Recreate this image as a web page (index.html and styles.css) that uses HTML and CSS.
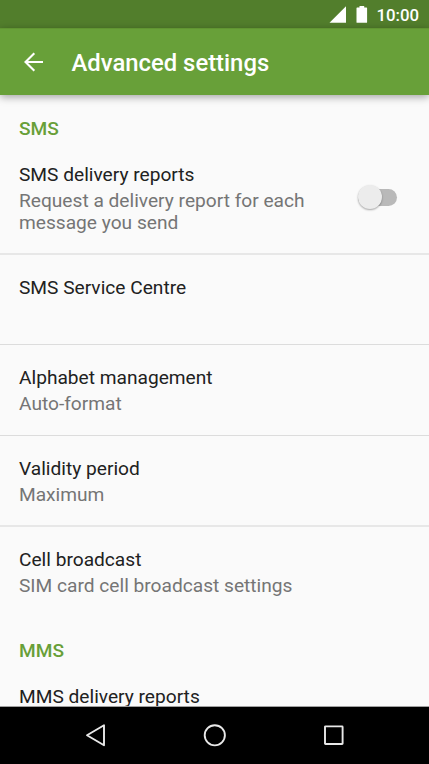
FILE: index.html
```html
<!DOCTYPE html>
<html lang="en">
<head>
<meta charset="utf-8">
<title>Advanced settings</title>
<link rel="stylesheet" href="styles.css">
</head>
<body>
<div class="status">
  <svg class="signal" width="18" height="18" viewBox="0 0 18 18"><path d="M0.5 16.8L17 0.3v16.5z" fill="#fff"/></svg>
  <svg class="battery" width="12" height="18" viewBox="0 0 12 18"><path d="M3.5 0h4.7v1.6h2.3q.6 0 .6.6v14q0 .6-.6.6h-9.4q-.6 0-.6-.6v-14q0-.6.6-.6h2.4z" fill="#fff"/></svg>
  <span class="clock">10:00</span>
</div>
<header class="bar">
  <svg class="back" width="22" height="22" viewBox="0 0 22 22"><path d="M20 11H2.8M11.3 2.2L2.5 11l8.8 8.8" fill="none" stroke="#fff" stroke-width="2.1"/></svg>
  <h1>Advanced settings</h1>
</header>
<main>
  <h2>SMS</h2>
  <section class="row reports">
    <div class="text"><h3>SMS delivery reports</h3><p>Request a delivery report for each<br>message you send</p></div>
    <div class="toggle"><span class="knob"></span></div>
  </section>
  <section class="row centre"><div class="text"><h3>SMS Service Centre</h3></div></section>
  <section class="row"><div class="text"><h3>Alphabet management</h3><p>Auto-format</p></div></section>
  <section class="row validity"><div class="text"><h3>Validity period</h3><p>Maximum</p></div></section>
  <section class="row last"><div class="text"><h3>Cell broadcast</h3><p>SIM card cell broadcast settings</p></div></section>
  <h2 class="mms">MMS</h2>
  <section class="row final"><div class="text"><h3>MMS delivery reports</h3></div></section>
</main>
<nav>
  <svg width="24" height="26" viewBox="0 0 24 26"><path d="M20 3.3v20L3 13.3z" fill="none" stroke="#e8e8e8" stroke-width="1.9" stroke-linejoin="round"/></svg>
  <svg width="24" height="26" viewBox="0 0 24 26"><circle cx="11.8" cy="13.3" r="10.1" fill="none" stroke="#e8e8e8" stroke-width="1.9"/></svg>
  <svg width="24" height="26" viewBox="0 0 24 26"><rect x="3" y="4.4" width="17.6" height="17.6" rx=".5" fill="none" stroke="#e8e8e8" stroke-width="1.9"/></svg>
</nav>
</body>
</html>
```
FILE: styles.css
```css
* { box-sizing: border-box; margin: 0; padding: 0; }
body { width: 429px; height: 764px; overflow: hidden; display: flex; flex-direction: column; background: #fafafa; font-family: Roboto, sans-serif; }
svg { display: block; flex: none; }
.status { height: 28px; flex: none; background: #527e2c; display: flex; align-items: flex-start; justify-content: flex-end; padding: 6px 10px 0 0; color: #fff; }
.battery { margin-left: 9px; }
.clock { margin: -1px 0 0 8px; font-size: 16.8px; font-weight: 500; line-height: 20px; }
.bar { height: 67px; flex: none; background: #68a039; color: #fff; display: flex; align-items: center; padding-left: 23px; border-top: 1px solid #619532; box-shadow: 0 2px 8px rgba(0,0,0,.36); z-index: 1; }
h1 { margin: 2px 0 0 26.5px; font-size: 23.85px; font-weight: 500; line-height: 30px; }
main { flex: 1; min-height: 0; overflow: hidden; border-bottom: 1px solid #a0a0a0; }
h2 { height: 65px; padding: 22px 19px 0; font-size: 19.1px; line-height: 24px; font-weight: 500; color: #689f38; }
.row { height: 91px; padding: 21px 19px 0; border-bottom: 1px solid #dcdcdc; display: flex; justify-content: space-between; }
.reports { height: 95px; padding-top: 3px; border-bottom: 2px solid #e7e7e7; }
.centre { height: 90px; }
h3 { font-size: 19.15px; line-height: 24px; font-weight: 400; color: #212121; }
p { font-size: 19.15px; line-height: 22px; margin-top: 3px; color: #757575; }
.toggle { position: relative; width: 39px; height: 17px; margin: 26px 13px 0 0; border-radius: 9px; background: #b9b9b9; }
.knob { position: absolute; left: 0; top: -4px; width: 24px; height: 24px; border-radius: 50%; background: #ececec; box-shadow: 0 1px 2px rgba(0,0,0,.35); }
.validity { border-bottom: 2px solid #e7e7e7; }
.last { border: 0; }
.mms { height: 67px; padding-top: 21px; }
.final { border: 0; padding-top: 0; }
nav { height: 57px; flex: none; background: #000; display: flex; justify-content: center; align-items: center; gap: 95px; }
nav svg { margin-top: -1px; }
```
